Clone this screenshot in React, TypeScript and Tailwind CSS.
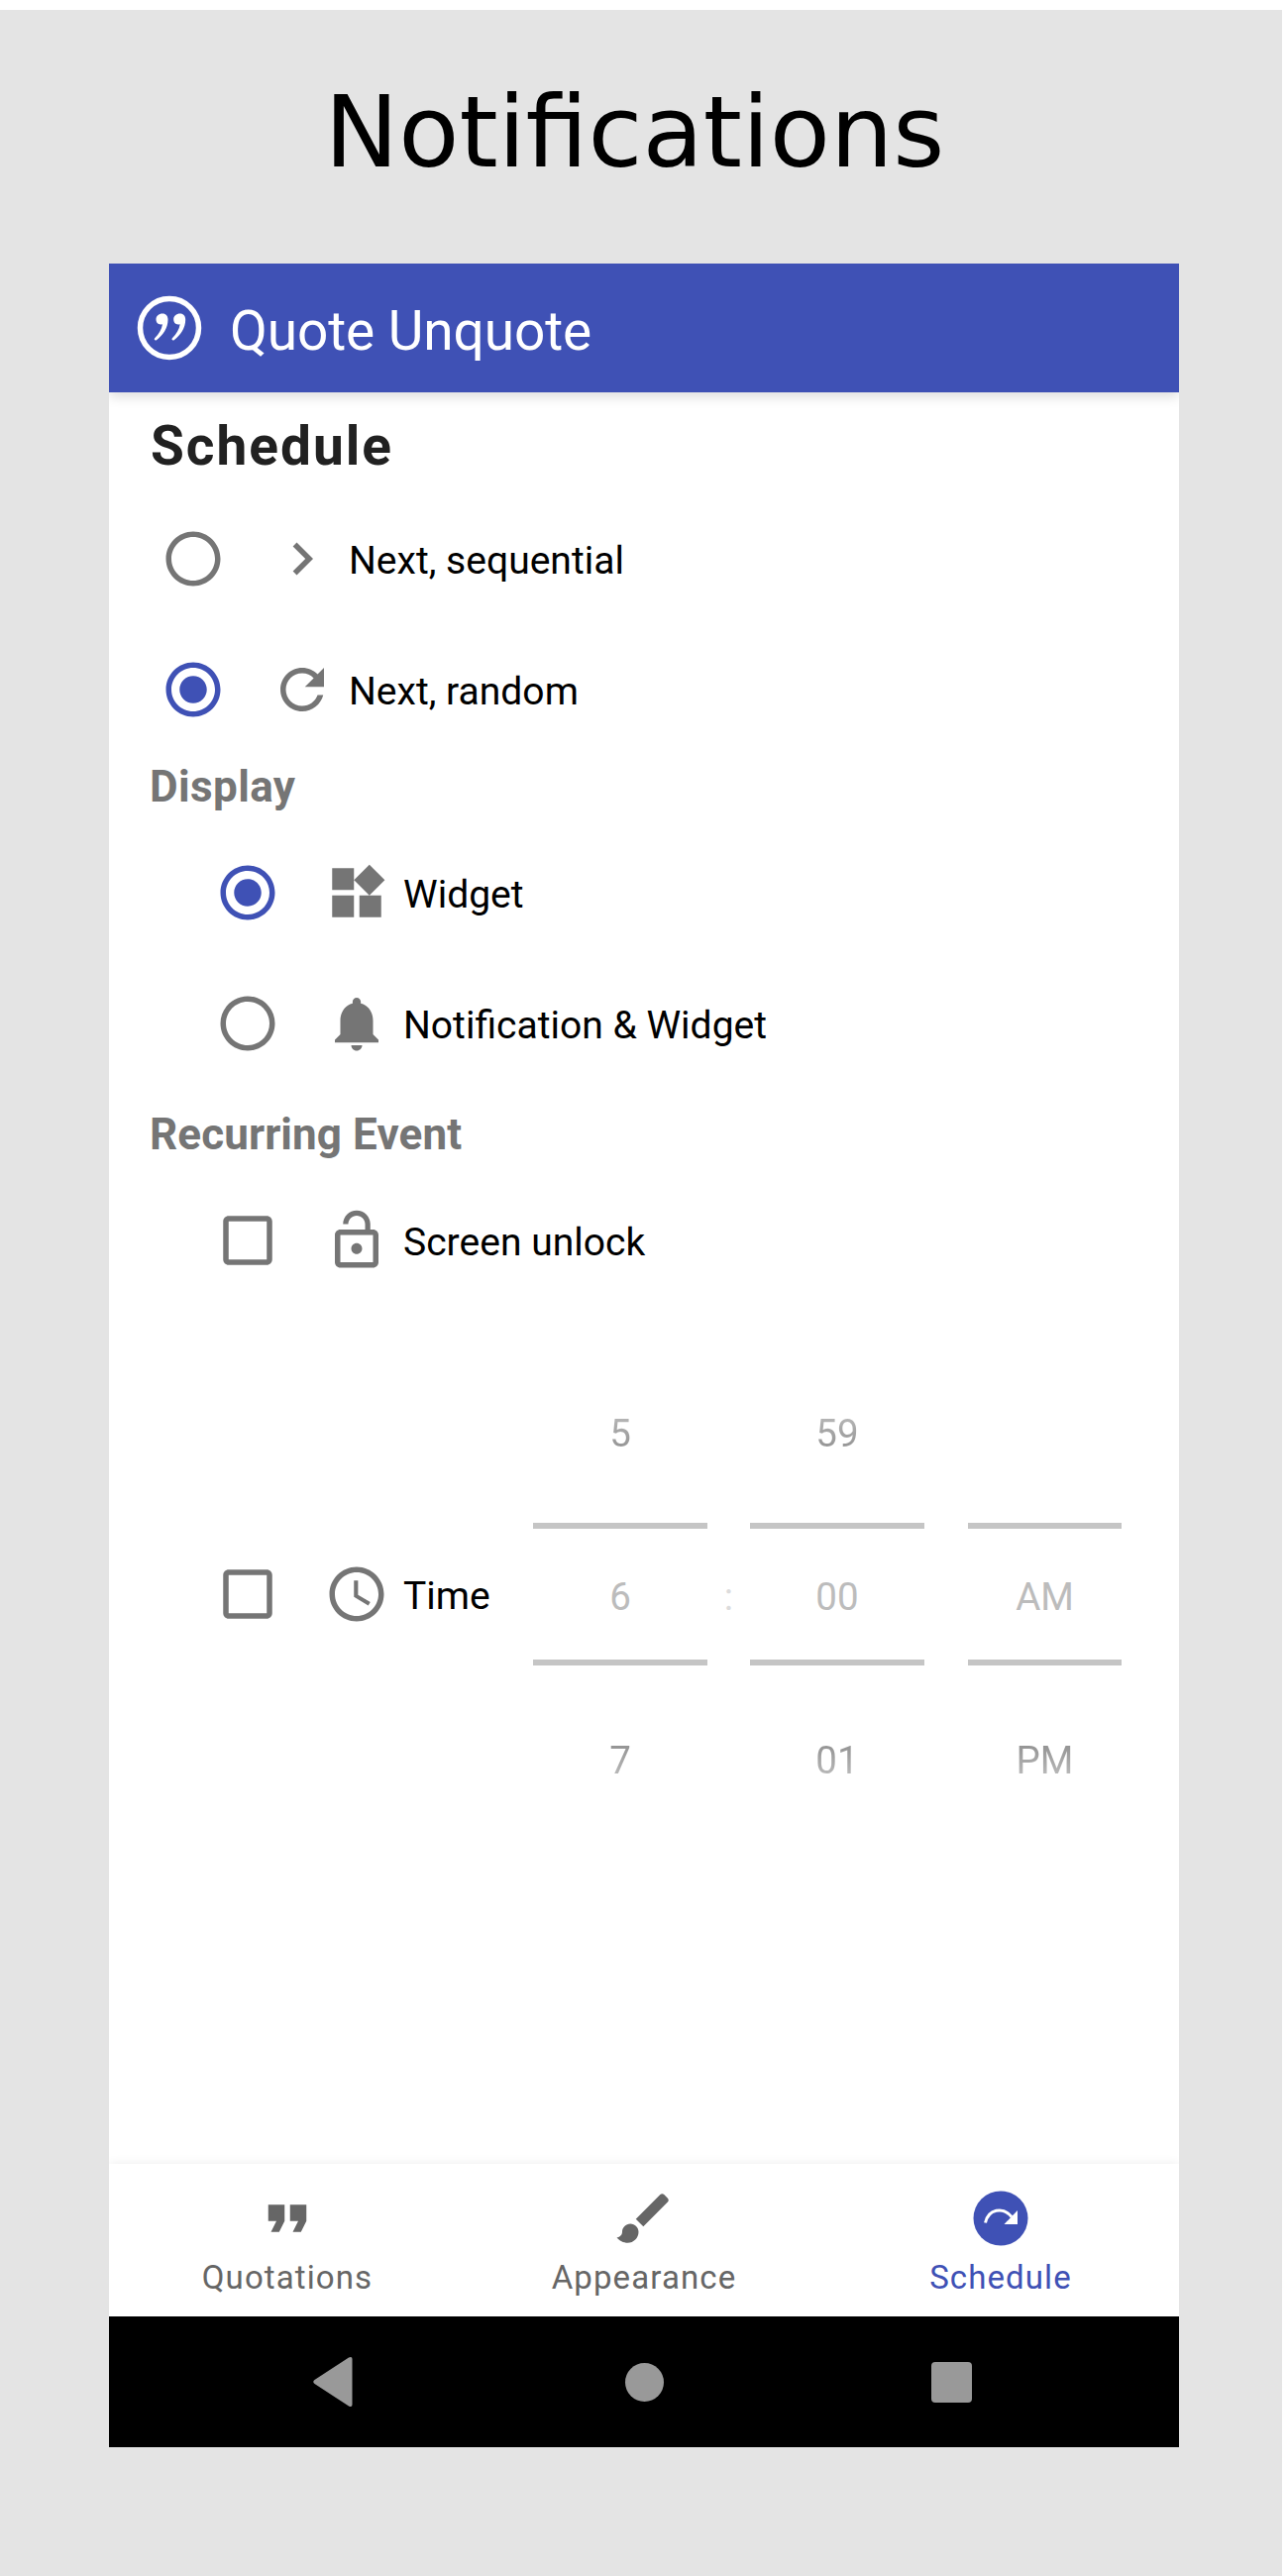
import React from "react";

type IconProps = { d: string; className?: string };

function Icon({ d, className = "" }: IconProps) {
  return (
    <svg viewBox="0 0 24 24" fill="currentColor" className={"size-[66px] shrink-0 " + className}>
      <path d={d} />
    </svg>
  );
}

const paths = {
  radioOff: "M12 2C6.48 2 2 6.48 2 12s4.48 10 10 10 10-4.48 10-10S17.52 2 12 2zm0 18c-4.42 0-8-3.58-8-8s3.58-8 8-8 8 3.58 8 8-3.58 8-8 8z",
  radioOn: "M12 7c-2.76 0-5 2.24-5 5s2.24 5 5 5 5-2.24 5-5-2.24-5-5-5zm0-5C6.48 2 2 6.48 2 12s4.48 10 10 10 10-4.48 10-10S17.52 2 12 2zm0 18c-4.42 0-8-3.58-8-8s3.58-8 8-8 8 3.58 8 8-3.58 8-8 8z",
  box: "M19 5v14H5V5h14m0-2H5c-1.1 0-2 .9-2 2v14c0 1.1.9 2 2 2h14c1.1 0 2-.9 2-2V5c0-1.1-.9-2-2-2z",
  chevron: "M10 6L8.59 7.41 13.17 12l-4.58 4.59L10 18l6-6z",
  refresh: "M17.65 6.35C16.2 4.9 14.21 4 12 4c-4.42 0-7.99 3.58-7.99 8s3.57 8 7.99 8c3.73 0 6.84-2.55 7.73-6h-2.08c-.82 2.33-3.04 4-5.65 4-3.31 0-6-2.69-6-6s2.69-6 6-6c1.66 0 3.14.69 4.22 1.78L13 11h7V4l-2.35 2.35z",
  widgets: "M13 13v8h8v-8h-8zM3 21h8v-8H3v8zM3 3v8h8V3H3zm13.66-1.31L11 7.34 16.66 13l5.66-5.66-5.66-5.65z",
  bell: "M12 22c1.1 0 2-.9 2-2h-4c0 1.1.89 2 2 2zm6-6v-5c0-3.07-1.64-5.64-4.5-6.32V4c0-.83-.67-1.5-1.5-1.5s-1.5.67-1.5 1.5v.68C7.63 5.36 6 7.92 6 11v5l-2 2v1h16v-1l-2-2z",
  unlock: "M12 17c1.1 0 2-.9 2-2s-.9-2-2-2-2 .9-2 2 .9 2 2 2zm6-9h-1V6c0-2.76-2.24-5-5-5S7 3.24 7 6h1.9c0-1.71 1.39-3.1 3.1-3.1 1.71 0 3.1 1.39 3.1 3.1v2H6c-1.1 0-2 .9-2 2v10c0 1.1.9 2 2 2h12c1.1 0 2-.9 2-2V10c0-1.1-.9-2-2-2zm0 12H6V10h12v10z",
  clock: "M11.99 2C6.47 2 2 6.48 2 12s4.47 10 9.99 10C17.52 22 22 17.52 22 12S17.52 2 11.99 2zM12 20c-4.42 0-8-3.58-8-8s3.58-8 8-8 8 3.58 8 8-3.58 8-8 8zm-1-13h1.5v5.25l4.5 2.67-.75 1.23L11 13z",
  quote: "M6 17h3l2-4V7H5v6h3zm8 0h3l2-4V7h-6v6h3z",
  brush: "M7 14c-1.66 0-3 1.34-3 3 0 1.31-1.16 2-2 2 .92 1.22 2.49 2 4 2 2.21 0 4-1.79 4-4 0-1.66-1.34-3-3-3zm13.71-9.37l-1.34-1.34c-.39-.39-1.02-.39-1.41 0L9 12.25 11.75 15l8.96-8.96c.39-.39.39-1.02 0-1.41z",
};

type RowProps = { control: string; on?: boolean; icon: string; label: string; className: string };

function Row({ control, on, icon, label, className }: RowProps) {
  return (
    <div className={"flex h-[132px] items-center text-[#757575] " + className}>
      <Icon d={control} className={on ? "text-[#3f51b5]" : ""} />
      <Icon d={icon} className="ml-11" />
      <span className="ml-[14px] pt-[5px] text-[39.05px] whitespace-nowrap text-black">{label}</span>
    </div>
  );
}

function Wheel({ values, className }: { values: string[]; className: string }) {
  return (
    <div className={"flex flex-col text-center text-[38.5px] leading-[44px] " + className}>
      <div className="h-[126px] bg-linear-to-b from-[#bdbdbd] from-10% to-[#8e8e8e] to-45% bg-clip-text pt-[14px] text-transparent">{values[0]}</div>
      <div className="flex h-36 items-center justify-center border-y-[6px] border-[#c5c5c5] pt-[5px] text-[#bcbcbc]">{values[1]}</div>
      <div className="h-[126px] bg-linear-to-b from-[#8e8e8e] from-60% to-[#bdbdbd] to-90% bg-clip-text pt-[74px] text-transparent">{values[2]}</div>
    </div>
  );
}

export default function App() {
  return (
    <div className="h-[2600px] w-[1300px] overflow-hidden bg-white pt-[10px] font-['Roboto',sans-serif]">
      <div className="h-[2590px] w-[1294px] bg-[#e4e4e4]">
        <h1 className="flex h-64 items-center justify-center pr-[13px] pb-2 font-['DejaVu_Sans',sans-serif] text-[100px] text-black">Notifications</h1>
        <main className="ml-[110px] flex h-[2204px] w-[1080px] flex-col bg-white">
          <header className="z-10 flex h-[130px] shrink-0 items-center bg-[#3f51b5] text-white shadow-[0_4px_12px_rgba(0,0,0,0.14)] [clip-path:inset(0_0_-20px_0)]">
            <svg viewBox="0 0 66 66" className="ml-7 size-[66px]" fill="none" stroke="white">
              <circle cx="33" cy="33" r="29.5" strokeWidth="5.5" />
              <g fill="white" stroke="none">
                <path d="M26 18.5c3.5 0 5.5 2.5 5.5 6.2 0 8-5 15.5-11.5 20.6-1.5 1-3-.7-1.8-2 4.3-4.2 7-9 7.8-14-4.5 1-6.5-1.8-6.5-5 0-3.3 2.8-5.8 6.5-5.8z" />
                <path d="M43.7 18.5c3.5 0 5.5 2.5 5.5 6.2 0 8-5 15.5-11.5 20.6-1.5 1-3-.7-1.8-2 4.3-4.2 7-9 7.8-14-4.5 1-6.5-1.8-6.5-5 0-3.3 2.8-5.8 6.5-5.8z" />
              </g>
            </svg>
            <span className="ml-7 pt-[6px] text-[55px] tracking-[-0.1px]">Quote Unquote</span>
          </header>
          <section className="flex-1">
            <h2 className="h-[102px] pt-[21px] pl-[42px] text-[55px] leading-[66px] font-bold tracking-[2px] text-[#212121]">Schedule</h2>
            <Row control={paths.radioOff} icon={paths.chevron} label="Next, sequential" className="pl-[52px]" />
            <Row control={paths.radioOn} on icon={paths.refresh} label="Next, random" className="pl-[52px]" />
            <h3 className="h-[73px] pt-[6px] pl-[41px] text-[44px] leading-[52px] font-bold tracking-[0.4px] text-[#757575]">Display</h3>
            <Row control={paths.radioOn} on icon={paths.widgets} label="Widget" className="pl-[107px]" />
            <Row control={paths.radioOff} icon={paths.bell} label="Notification & Widget" className="pl-[107px]" />
            <h3 className="h-[87px] pt-[20px] pl-[41px] text-[44px] leading-[52px] font-bold tracking-[0.1px] text-[#757575]">Recurring Event</h3>
            <Row control={paths.box} icon={paths.unlock} label="Screen unlock" className="pl-[107px]" />
            <div className="mt-[93px] flex h-[396px] items-center">
              <Row control={paths.box} icon={paths.clock} label="Time" className="w-[428px] pl-[107px]" />
              <Wheel values={["5", "6", "7"]} className="w-44" />
              <span className="w-[43px] pt-[5px] text-center text-[38.5px] text-[#dcdcdc]">:</span>
              <Wheel values={["59", "00", "01"]} className="w-44" />
              <Wheel values={["", "AM", "PM"]} className="ml-11 w-[155px]" />
            </div>
          </section>
          <nav className="grid h-[154px] shrink-0 grid-cols-3 text-center text-[33px] tracking-[1.1px] text-[#666] shadow-[0_0_10px_rgba(0,0,0,0.08)] [clip-path:inset(-16px_0_0_0)]">
            <div className="flex flex-col items-center pt-[22px]">
              <Icon d={paths.quote} />
              <span className="leading-[54px]">Quotations</span>
            </div>
            <div className="flex flex-col items-center pt-[22px]">
              <Icon d={paths.brush} />
              <span className="leading-[54px]">Appearance</span>
            </div>
            <div className="flex flex-col items-center pt-[22px] text-[#3f51b5]">
              <svg viewBox="0 0 66 66" className="size-[66px]">
                <circle cx="33" cy="33" r="27.5" fill="currentColor" />
                <path d="M17.5 37.5C20.5 24 35 20.5 44 31.5" fill="none" stroke="white" strokeWidth="3" />
                <path d="M50 25v14H36.5z" fill="white" />
              </svg>
              <span className="leading-[54px]">Schedule</span>
            </div>
          </nav>
          <footer className="flex h-33 shrink-0 items-center bg-black text-[#999]">
            <svg viewBox="0 0 40 52" className="ml-[206px] h-[52px] w-10" fill="currentColor">
              <path d="M1.5 24 36 1.5Q39.5 0 39.5 3v46q0 3-3.5 1.5L1.5 28Q-1 26 1.5 24z" />
            </svg>
            <div className="ml-[275px] size-[39px] rounded-full bg-current" />
            <div className="ml-[270px] h-[41px] w-[41px] rounded-[4px] bg-current" />
          </footer>
        </main>
      </div>
    </div>
  );
}
